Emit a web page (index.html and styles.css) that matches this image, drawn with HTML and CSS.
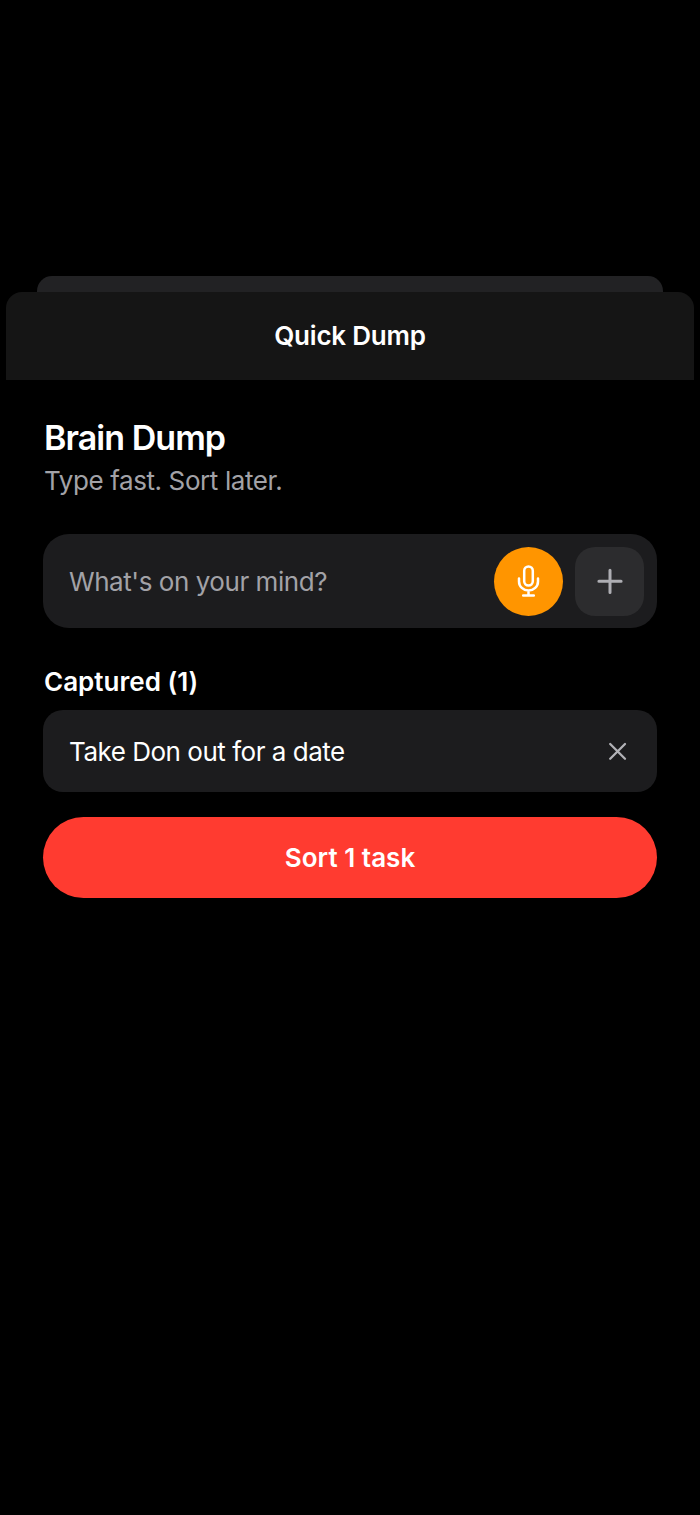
FILE: index.html
```html
<!DOCTYPE html>
<html lang="en">
<head>
<meta charset="utf-8">
<title>Quick Dump</title>
<link rel="stylesheet" href="styles.css">
</head>
<body>
<div class="backdrop-card"></div>
<main class="sheet">
  <header class="sheet-header"><span class="text title">Quick Dump</span></header>
  <section class="content">
    <h1 class="heading"><span class="text">Brain Dump</span></h1>
    <p class="subtitle"><span class="text">Type fast. Sort later.</span></p>
    <div class="composer">
      <span class="text placeholder">What's on your mind?</span>
      <button class="mic" aria-label="Record">
        <svg width="24" height="34" viewBox="0 0 24 34" fill="none" stroke="#fff" stroke-width="2.5" stroke-linecap="round"><rect x="8.2" y="2.4" width="8.6" height="19.2" rx="4.3"/><path d="M3 14.6v2.8a9.5 9.2 0 0 0 19 0v-2.8M12.5 26.8v4.6M7.2 31.6h10.6"/></svg>
      </button>
      <button class="add" aria-label="Add">
        <svg width="28" height="28" viewBox="0 0 28 28" fill="none" stroke="#aeaeb3" stroke-width="3" stroke-linecap="round"><path d="M14 3.2v22.2M2.9 14.3h22.2"/></svg>
      </button>
    </div>
    <h2 class="captured"><span class="text">Captured (1)</span></h2>
    <div class="task">
      <span class="text task-name">Take Don out for a date</span>
      <button class="remove" aria-label="Remove">
        <svg width="20" height="20" viewBox="0 0 20 20" fill="none" stroke="#b2b2b7" stroke-width="2.3" stroke-linecap="round"><path d="M2.2 3l14.8 14.8M17 3L2.2 17.8"/></svg>
      </button>
    </div>
    <button class="sort"><span class="text">Sort 1 task</span></button>
  </section>
</main>
</body>
</html>
```
FILE: styles.css
```css
* { box-sizing: border-box; }
body { margin: 0; min-height: 1515px; padding-top: 276px; background: #000; color: #fff; font-family: Inter, "Liberation Sans", sans-serif; }
h1, h2, p { margin: 0; }
button { border: 0; padding: 0; font: inherit; color: inherit; display: flex; align-items: center; justify-content: center; }
.text { white-space: nowrap; }
.backdrop-card { height: 16px; margin: 0 37px; background: #222224; border-radius: 15px 15px 0 0; }
.sheet { margin: 0 6px; }
.sheet-header { height: 87.5px; padding-bottom: 1px; display: flex; align-items: center; justify-content: center; background: #151515; border-radius: 16px 16px 0 0; }
.title { font-size: 26px; font-weight: 600; letter-spacing: -0.2px; }
.content { padding: 37.5px 37.3px 0 37.4px; }
.heading { font-size: 34px; line-height: 42px; font-weight: 600; letter-spacing: -0.95px; }
.subtitle { margin-top: 4px; font-size: 26px; line-height: 35px; color: #a2a2a7; letter-spacing: -0.4px; }
.heading, .subtitle, .captured { padding-left: 0.6px; }
.composer { height: 94px; margin-top: 36px; padding: 0 12.5px 0 25.6px; display: flex; align-items: center; background: #1c1c1e; border-radius: 26px; }
.placeholder { flex: 1; font-size: 26px; color: #a2a2a7; letter-spacing: -0.45px; }
.mic { width: 69px; height: 69px; border-radius: 50%; background: #ff9500; }
.add { width: 69px; height: 69px; margin-left: 12.3px; border-radius: 20px; background: #2c2c2e; }
.captured { margin-top: 35px; font-size: 26px; line-height: 37px; font-weight: 600; letter-spacing: 0.02px; }
.task { height: 82px; margin-top: 10px; padding: 0 29px 0 25.6px; display: flex; align-items: center; justify-content: space-between; background: #1c1c1e; border-radius: 20px; }
.task-name { font-size: 26px; letter-spacing: -0.48px; }
.remove { background: none; }
.sort { width: 100%; height: 81px; margin-top: 25px; border-radius: 41px; background: #ff3b30; font-size: 26px; font-weight: 600; letter-spacing: 0.03px; }
```
